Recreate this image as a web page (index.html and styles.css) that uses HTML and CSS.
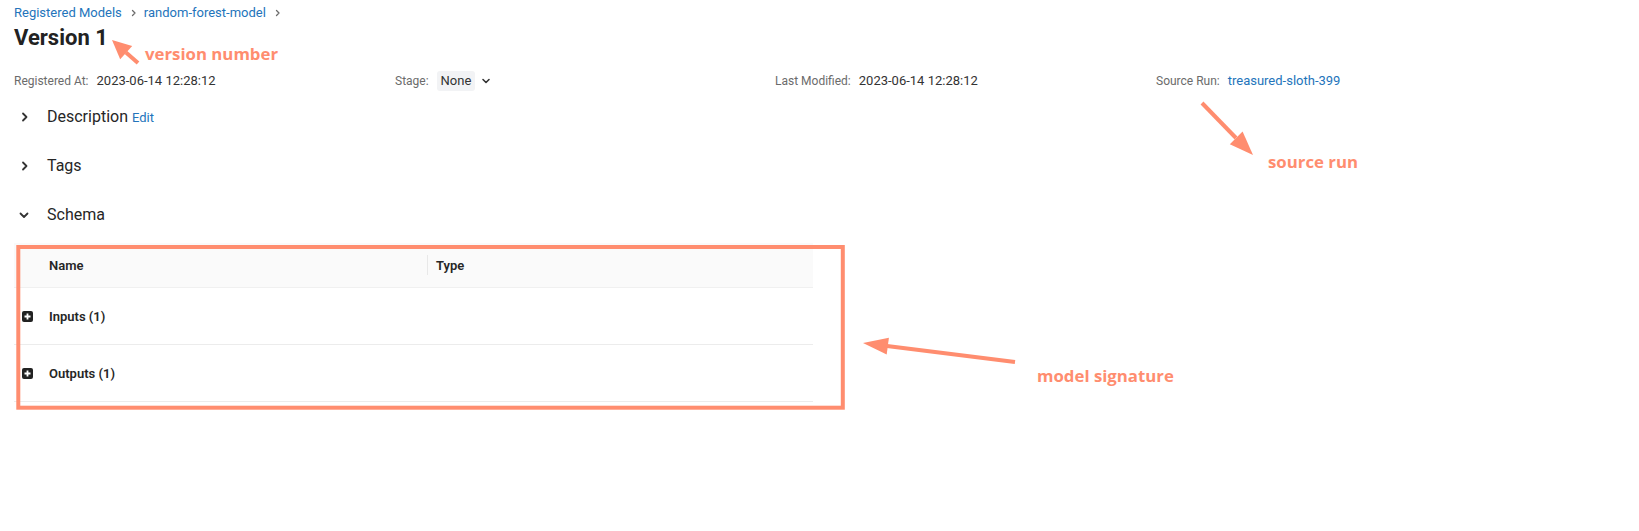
FILE: index.html
```html
<!DOCTYPE html>
<html lang="en">
<head>
<meta charset="utf-8">
<title>Version 1 - random-forest-model</title>
<link rel="stylesheet" href="styles.css">
</head>
<body>
<div class="page">
  <nav class="breadcrumb">
    <a class="link" href="#">Registered Models</a>
    <svg class="crumb-sep" viewBox="0 0 12 12" width="12" height="12"><path d="M4.5 3.5 L7 6 L4.5 8.5" fill="none" stroke="#6b6b6b" stroke-width="1.3" stroke-linecap="round" stroke-linejoin="round"/></svg>
    <a class="link" href="#">random-forest-model</a>
    <svg class="crumb-sep" viewBox="0 0 12 12" width="12" height="12"><path d="M4.5 3.5 L7 6 L4.5 8.5" fill="none" stroke="#6b6b6b" stroke-width="1.3" stroke-linecap="round" stroke-linejoin="round"/></svg>
  </nav>

  <h1 class="title">Version 1</h1>

  <div class="meta">
    <div class="meta-item"><span class="meta-label">Registered At:</span><span class="meta-value">2023-06-14 12:28:12</span></div>
    <div class="meta-item"><span class="meta-label">Stage:</span><span class="tag">None</span>
      <svg class="stage-caret" viewBox="0 0 12 12" width="12" height="12"><path d="M3 4.5 L6 7.5 L9 4.5" fill="none" stroke="#333" stroke-width="1.6" stroke-linecap="round" stroke-linejoin="round"/></svg>
    </div>
    <div class="meta-item"><span class="meta-label">Last Modified:</span><span class="meta-value">2023-06-14 12:28:12</span></div>
    <div class="meta-item"><span class="meta-label">Source Run:</span><a class="link meta-value" href="#">treasured-sloth-399</a></div>
  </div>

  <div class="sections">
    <div class="section-head">
      <svg class="chev" viewBox="0 0 12 12" width="12" height="12"><path d="M5 2.5 L8.5 6 L5 9.5" fill="none" stroke="#333" stroke-width="1.8" stroke-linecap="round" stroke-linejoin="round"/></svg>
      <span class="section-title">Description</span><a class="link edit" href="#">Edit</a>
    </div>
    <div class="section-head">
      <svg class="chev" viewBox="0 0 12 12" width="12" height="12"><path d="M5 2.5 L8.5 6 L5 9.5" fill="none" stroke="#333" stroke-width="1.8" stroke-linecap="round" stroke-linejoin="round"/></svg>
      <span class="section-title">Tags</span>
    </div>
    <div class="section-head">
      <svg class="chev" viewBox="0 0 12 12" width="12" height="12"><path d="M2.5 4.5 L6 8 L9.5 4.5" fill="none" stroke="#333" stroke-width="1.8" stroke-linecap="round" stroke-linejoin="round"/></svg>
      <span class="section-title">Schema</span>
    </div>
  </div>

  <div class="schema">
    <div class="schema-head">
      <div class="cell-expand"></div>
      <div class="cell-name">Name</div>
      <div class="col-sep"></div>
      <div class="cell-type">Type</div>
    </div>
    <div class="schema-row">
      <div class="cell-expand"><svg viewBox="0 0 11 11" width="11" height="11"><rect x="0" y="0" width="11" height="11" rx="2" fill="#222"/><path d="M5.5 2.5 V8.5 M2.5 5.5 H8.5" stroke="#fff" stroke-width="1.8"/></svg></div>
      <div class="cell-name strong">Inputs (1)</div>
    </div>
    <div class="schema-row">
      <div class="cell-expand"><svg viewBox="0 0 11 11" width="11" height="11"><rect x="0" y="0" width="11" height="11" rx="2" fill="#222"/><path d="M5.5 2.5 V8.5 M2.5 5.5 H8.5" stroke="#fff" stroke-width="1.8"/></svg></div>
      <div class="cell-name strong">Outputs (1)</div>
    </div>
  </div>

  <svg class="annot" viewBox="0 0 1639 531" width="1639" height="531">
    <g fill="#ff8d6f" stroke="none">
      <line x1="138" y1="63" x2="126" y2="52.5" stroke="#ff8d6f" stroke-width="4"/>
      <polygon points="112,40 132.2,45.9 120.2,59.3"/>
      <line x1="1202" y1="103" x2="1236" y2="138" stroke="#ff8d6f" stroke-width="4"/>
      <polygon points="1253,155 1229.8,144.2 1242.6,131.6"/>
      <line x1="1015" y1="362" x2="887" y2="346" stroke="#ff8d6f" stroke-width="4"/>
      <polygon points="863,343 888.9,337.7 886.7,354.5"/>
      <rect x="18.3" y="247" width="824.5" height="160.7" fill="none" stroke="#ff8d6f" stroke-width="4"/>
      <text class="annot-text" x="145" y="60">version number</text>
      <text class="annot-text" x="1268" y="168">source run</text>
      <text class="annot-text" x="1037" y="382">model signature</text>
    </g>
  </svg>
</div>
</body>
</html>
```

FILE: styles.css
```css
html, body {
  margin: 0;
  padding: 0;
  background: #fff;
}
body {
  font-family: Roboto, "Liberation Sans", Arial, sans-serif;
  color: #333;
  width: 1639px;
  height: 531px;
  overflow: hidden;
}
.page {
  position: relative;
  padding: 3px 14px 0;
  height: 528px;
}
.link {
  color: #2374bb;
  text-decoration: none;
}
.breadcrumb {
  display: flex;
  align-items: center;
  height: 20px;
  font-size: 13px;
  line-height: 20px;
}
.crumb-sep {
  margin: 0 4px 0 6px;
  display: block;
}
.title {
  margin: 0;
  font-size: 22px;
  line-height: 30px;
  font-weight: 700;
  color: #222;
}
.meta {
  margin-top: 18px;
  display: grid;
  grid-template-columns: 381px 380px 381px auto;
  height: 20px;
}
.meta-item {
  display: flex;
  align-items: center;
  line-height: 20px;
}
.meta-label {
  font-size: 12px;
  color: #6b6b6b;
  margin-right: 8px;
}
.meta-value {
  font-size: 13px;
}
.tag {
  font-size: 13px;
  background: #f2f3f5;
  border-radius: 3px;
  padding: 0 4px;
  height: 20px;
  line-height: 20px;
}
.stage-caret {
  margin-left: 5px;
  display: block;
}
.sections {
  margin-top: 1px;
}
.section-head {
  display: flex;
  align-items: center;
  height: 49px;
  padding-left: 4px;
}
.chev {
  display: block;
  flex: none;
}
.section-title {
  margin-left: 17px;
  font-size: 16px;
  line-height: 24px;
  color: #262626;
}
.edit {
  margin-left: 4px;
  font-size: 13px;
  align-self: center;
  padding-top: 2px;
}
.schema {
  margin-top: 4px;
  width: 799px;
  font-size: 13px;
}
.schema-head {
  display: flex;
  align-items: center;
  height: 44px;
  background: #fafafa;
  border-bottom: 1px solid #f0f0f0;
  font-weight: 600;
  color: #262626;
}
.schema-row {
  display: flex;
  align-items: center;
  height: 56px;
  border-bottom: 1px solid #ececec;
}
.cell-expand {
  width: 27px;
  padding-left: 8px;
  flex: none;
  display: flex;
  align-items: center;
}
.cell-expand svg {
  display: block;
}
.cell-name {
  width: 378px;
  flex: none;
}
.strong {
  font-weight: 600;
  color: #262626;
}
.col-sep {
  width: 1px;
  height: 20px;
  background: #e8e8e8;
  flex: none;
}
.cell-type {
  padding-left: 8px;
}
.annot {
  position: absolute;
  top: 0;
  left: 0;
  pointer-events: none;
}
.annot-text {
  font-family: "Open Sans", "Noto Sans", sans-serif;
  font-weight: 700;
  font-size: 16.8px;
}
```
